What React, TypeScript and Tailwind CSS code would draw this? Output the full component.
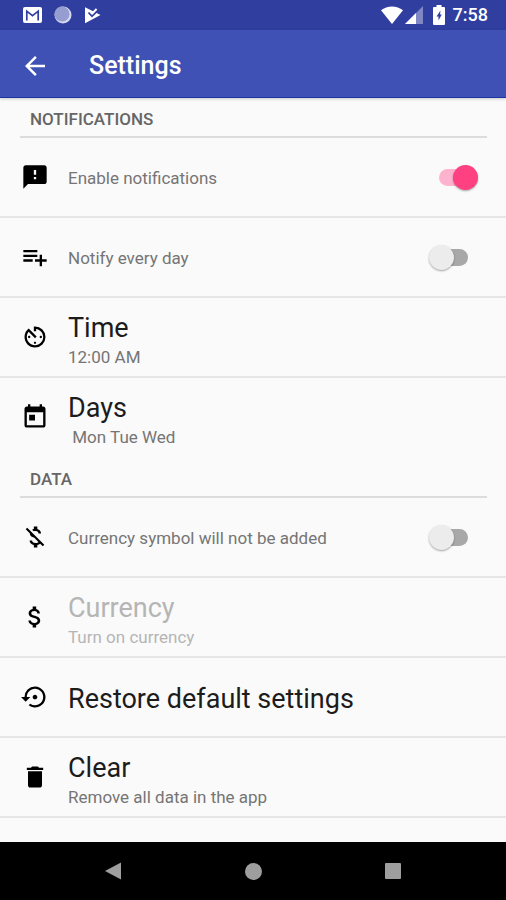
import { useState } from "react";
import type { ReactNode } from "react";
import {
  MdArrowBack,
  MdAttachMoney,
  MdAvTimer,
  MdDelete,
  MdMoneyOff,
  MdSettingsBackupRestore,
} from "react-icons/md";

const FeedbackIcon = () => (
  <svg viewBox="0 0 24 24" fill="currentColor" className="size-7">
    <path d="M20 2H4c-1.1 0-1.990.9-1.990 2L2 22l4-4h14c1.1 0 2-.9 2-2V4c0-1.1-.9-2-2-2zm-7 12h-2v-2h2v2zm0-4h-2V6h2v4z" />
  </svg>
);

const PlaylistAddIcon = () => (
  <svg viewBox="0 0 24 24" fill="currentColor" className="size-7">
    <path d="M14 10H2v2h12v-2zm0-4H2v2h12V6zm4 8v-4h-2v4h-4v2h4v4h2v-4h4v-2h-4zM2 16h8v-2H2v2z" />
  </svg>
);

const TodayIcon = () => (
  <svg viewBox="0 0 24 24" fill="currentColor" className="size-7">
    <path d="M19 3h-1V1h-2v2H8V1H6v2H5c-1.110 0-1.990.9-1.990 2L3 19c0 1.1.89 2 2 2h14c1.1 0 2-.9 2-2V5c0-1.1-.9-2-2-2zm0 16H5V8h14v11zM7 10h5v5H7v-5z" />
  </svg>
);

const StatusBar = () => (
  <div className="flex h-[30px] items-center justify-between bg-[#303f9f] pr-[18px] pl-[23px] text-white">
    <div className="flex items-center gap-3">
      {/* Mail */}
      <svg viewBox="0 0 19 16" className="h-4 w-[19px]">
        <rect width="19" height="16" rx="2" fill="#fff" />
        <path
          d="M3.8 13.5V4.2L9.5 8.6l5.7-4.4v9.3"
          fill="none"
          stroke="#303f9f"
          strokeWidth="1.7"
        />
      </svg>
      {/* Sync */}
      <svg viewBox="0 0 18 18" className="size-[18px]">
        <circle cx="9" cy="9" r="8.5" fill="#d5d9f0" />
        <circle cx="8" cy="8" r="7.5" fill="#959dd1" />
      </svg>
      {/* Play */}
      <svg viewBox="0 0 17 18" className="h-[18px] w-[17px]">
        <path d="M1 1.2 16.500 9 1 17.2z" fill="#fff" />
        <path
          d="M4.500 6.500 8 10.2l7.500-7.400"
          fill="none"
          stroke="#303f9f"
          strokeWidth="1.8"
        />
        <path d="M9 2.500 12 1l1.500 2.500L9.500 7z" fill="#303f9f" />
        <path d="M6.500 5.500 8.200 7.400 12.600 3" fill="none" stroke="#fff" strokeWidth="2" />
      </svg>
    </div>
    <div className="flex items-center">
      {/* Wifi */}
      <svg viewBox="0 0 22 18" className="h-[18px] w-[22px]">
        <path d="M0 4.200C6 -.9 16 -.9 22 4.200L11 18z" fill="#fff" />
      </svg>
      {/* Signal */}
      <svg viewBox="0 0 18 18" className="ml-0.5 size-[18px]">
        <path d="M0 18 18 0v18z" fill="#7f88c4" />
        <path d="M0 18 11 7v11z" fill="#fff" />
      </svg>
      {/* Battery */}
      <svg viewBox="0 0 12 20" className="ml-2.5 h-5 w-3">
        <path
          d="M3.500 0h5v2H11a1 1 0 0 1 1 1v16a1 1 0 0 1-1 1H1a1 1 0 0 1-1-1V3a1 1 0 0 1 1-1h2.500z"
          fill="#fff"
        />
        <path d="M7.500 5.500 3.500 11.500H5.500v4L8.800 9.500H7z" fill="#303f9f" />
      </svg>
      <span className="ml-2 text-lg leading-5 font-medium">7:58</span>
    </div>
  </div>
);

const SectionTitle = ({ children }: { children: ReactNode }) => (
  <h2 className="mr-[19px] ml-5 flex h-10 items-center border-b-2 border-[#dcdcdc] px-2.5 pt-1 text-[17px] leading-5 font-medium text-[#666]">
    {children}
  </h2>
);

type SwitchRowProps = {
  id: string;
  icon: ReactNode;
  label: string;
  checked: boolean;
  onChange: (value: boolean) => void;
};

const SwitchRow = ({ id, icon, label, checked, onChange }: SwitchRowProps) => (
  <div className="flex h-20 items-center border-b-2 border-[#e6e6e6] pr-7 pl-[21px]">
    {icon}
    <label htmlFor={id} className="ml-[19px] flex-1 pt-0.5 text-[17px] leading-5 text-[#757575]">
      {label}
    </label>
    <input
      type="checkbox"
      id={id}
      checked={checked}
      onChange={(e) => onChange(e.currentTarget.checked)}
      className="grid h-[25px] w-[49px] appearance-none items-center before:col-start-1 before:row-start-1 before:mx-auto before:h-[17px] before:w-[29px] before:rounded-full before:bg-[#a8a8a8] after:col-start-1 after:row-start-1 after:size-[25px] after:rounded-full after:bg-[#ececec] after:shadow-[0_1px_2px_rgba(0,0,0,0.35)] checked:before:bg-[#fdb3cd] checked:after:justify-self-end checked:after:bg-[#ff4081]"
    />
  </div>
);

type ActionRowProps = {
  icon: ReactNode;
  title: string;
  detail?: string;
  disabled?: boolean;
  last?: boolean;
};

const ActionRow = ({ icon, title, detail, disabled, last }: ActionRowProps) => (
  <button
    type="button"
    disabled={disabled}
    className={`flex h-20 w-full items-center border-b-2 pl-[21px] text-left ${
      last ? "border-transparent" : "border-[#e6e6e6]"
    }`}
  >
    {icon}
    <span className="ml-[19px] flex flex-col pt-1">
      <span
        className={`text-[27px] leading-9 ${disabled ? "text-[#b5b5b5]" : "text-[#1c1c1c]"}`}
      >
        {title}
      </span>
      {detail && (
        <span
          className={`text-[17px] leading-[22px] whitespace-pre ${
            disabled ? "text-[#b5b5b5]" : "text-[#757575]"
          }`}
        >
          {detail}
        </span>
      )}
    </span>
  </button>
);

const NavigationBar = () => (
  <nav className="mt-auto flex h-[58px] items-center justify-center gap-[110px] bg-black text-[#9e9e9e]">
    <button type="button" aria-label="Back" className="flex size-[30px] items-center justify-center">
      <svg viewBox="0 0 18 18" fill="currentColor" className="size-[18px]">
        <path d="M17 .5v17L1 9z" />
      </svg>
    </button>
    <button type="button" aria-label="Home" className="flex size-[30px] items-center justify-center">
      <span className="size-[17px] rounded-full bg-current" />
    </button>
    <button type="button" aria-label="Recents" className="flex size-[30px] items-center justify-center">
      <span className="size-4 rounded-[1px] bg-current" />
    </button>
  </nav>
);

export default function App() {
  const [notifications, setNotifications] = useState(true);
  const [everyDay, setEveryDay] = useState(false);
  const [currency, setCurrency] = useState(false);

  return (
    <div className="flex min-h-screen flex-col bg-[#fafafa] font-[Roboto,sans-serif] text-black">
      <StatusBar />

      <header className="flex h-[68px] items-center border-b border-[#1c35a0] bg-[#3f51b5] pt-1 pl-5 text-white shadow-[0_1px_3px_rgba(0,0,0,0.2)]">
        <button type="button" aria-label="Back">
          <MdArrowBack size={30} />
        </button>
        <h1 className="ml-[39px] text-[25px] leading-8 font-medium">Settings</h1>
      </header>

      <main className="flex flex-col">
        <SectionTitle>NOTIFICATIONS</SectionTitle>
        <SwitchRow
          id="notifications"
          icon={<FeedbackIcon />}
          label="Enable notifications"
          checked={notifications}
          onChange={setNotifications}
        />
        <SwitchRow
          id="everyDay"
          icon={<PlaylistAddIcon />}
          label="Notify every day"
          checked={everyDay}
          onChange={setEveryDay}
        />
        <ActionRow icon={<MdAvTimer size={28} />} title="Time" detail="12:00 AM" />
        <ActionRow icon={<TodayIcon />} title="Days" detail=" Mon Tue Wed" last />

        <SectionTitle>DATA</SectionTitle>
        <SwitchRow
          id="currency"
          icon={<MdMoneyOff size={28} />}
          label="Currency symbol will not be added"
          checked={currency}
          onChange={setCurrency}
        />
        <ActionRow
          icon={<MdAttachMoney size={28} />}
          title="Currency"
          detail="Turn on currency"
          disabled={!currency}
        />
        <ActionRow icon={<MdSettingsBackupRestore size={28} />} title="Restore default settings" />
        <ActionRow icon={<MdDelete size={28} />} title="Clear" detail="Remove all data in the app" />
      </main>

      <NavigationBar />
    </div>
  );
}
